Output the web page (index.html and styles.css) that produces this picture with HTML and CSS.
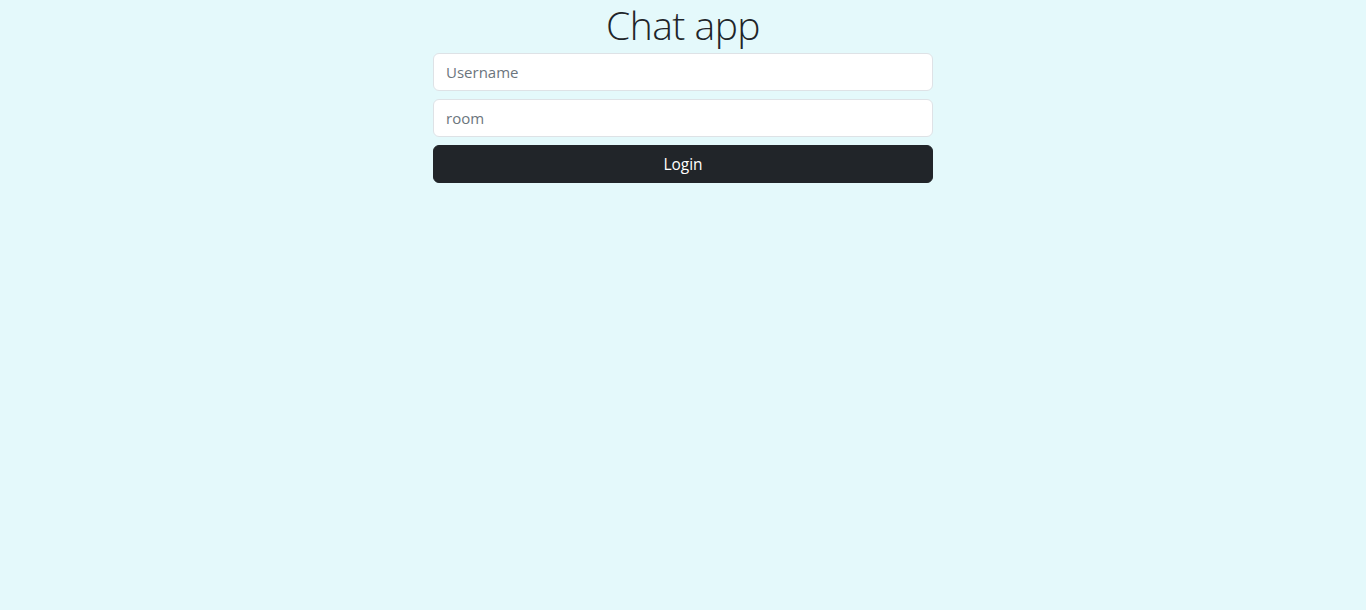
FILE: index.html
```html
<!DOCTYPE html>
<html lang="en">
<head>
<meta charset="utf-8">
<title>Chat app</title>
<link rel="stylesheet" href="styles.css">
</head>
<body>
<main class="page">
  <h1 class="title">Chat app</h1>
  <form class="login-form">
    <input class="field" type="text" placeholder="Username">
    <input class="field" type="text" placeholder="room">
    <button class="btn" type="button">Login</button>
  </form>
</main>
</body>
</html>
```
FILE: styles.css
```css
html, body {
  margin: 0;
  padding: 0;
  height: 100%;
}
body {
  background: #e4f9fb;
  font-family: "Open Sans", "Noto Sans", sans-serif;
  color: #212529;
}
.page {
  display: flex;
  flex-direction: column;
  align-items: center;
}
.title {
  margin: 0 0 5px;
  padding-top: 2px;
  font-size: 39px;
  font-weight: 300;
  line-height: 46px;
  letter-spacing: -0.5px;
}
.login-form {
  width: 500px;
  display: flex;
  flex-direction: column;
  gap: 8px;
}
.field {
  box-sizing: border-box;
  height: 38px;
  padding: 6px 12px;
  border: 1px solid #dee2e6;
  border-radius: 6px;
  background: #fff;
  font-family: inherit;
  font-size: 15px;
  color: #212529;
  outline: none;
}
.field::placeholder {
  color: #6c757d;
}
.btn {
  box-sizing: border-box;
  height: 38px;
  border: 1px solid #212529;
  border-radius: 6px;
  background: #212529;
  color: #fff;
  font-family: inherit;
  font-size: 15.5px;
  font-weight: 500;
  cursor: pointer;
}
```
